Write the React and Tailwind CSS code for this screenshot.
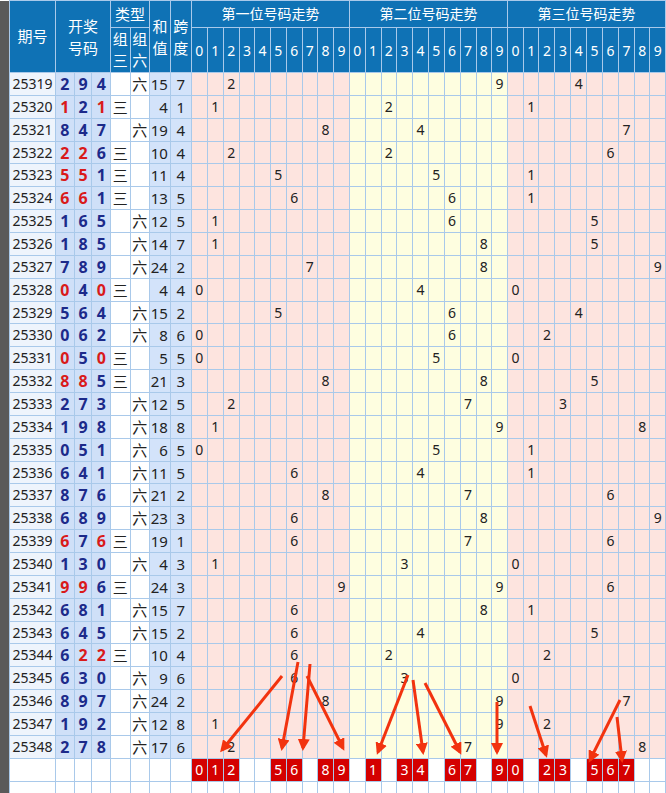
import React from 'react';

const rows = [
  ['25319', '294', '六', 15, 7], ['25320', '121', '三', 4, 1], ['25321', '847', '六', 19, 4],
  ['25322', '226', '三', 10, 4], ['25323', '551', '三', 11, 4], ['25324', '661', '三', 13, 5],
  ['25325', '165', '六', 12, 5], ['25326', '185', '六', 14, 7], ['25327', '789', '六', 24, 2],
  ['25328', '040', '三', 4, 4], ['25329', '564', '六', 15, 2], ['25330', '062', '六', 8, 6],
  ['25331', '050', '三', 5, 5], ['25332', '885', '三', 21, 3], ['25333', '273', '六', 12, 5],
  ['25334', '198', '六', 18, 8], ['25335', '051', '六', 6, 5], ['25336', '641', '六', 11, 5],
  ['25337', '876', '六', 21, 2], ['25338', '689', '六', 23, 3], ['25339', '676', '三', 19, 1],
  ['25340', '130', '六', 4, 3], ['25341', '996', '三', 24, 3], ['25342', '681', '六', 15, 7],
  ['25343', '645', '六', 15, 2], ['25344', '622', '三', 10, 4], ['25345', '630', '六', 9, 6],
  ['25346', '897', '六', 24, 2], ['25347', '192', '六', 12, 8], ['25348', '278', '六', 17, 6],
];

const picks = [
  [0, 1, 2, 5, 6, 8, 9],
  [1, 3, 4, 6, 7, 9],
  [0, 2, 3, 5, 6, 7],
];

const secBg = ['bg-[#fde4df]', 'bg-[#fefee0]', 'bg-[#fde4df]'];
const digits = [0, 1, 2, 3, 4, 5, 6, 7, 8, 9];
const cell = 'border border-[#a9c9ea] p-0 text-center';

const arrows = [
  [282, 676, 222, 750], [298, 662, 282, 748], [310, 664, 303, 748], [307, 676, 343, 748],
  [408, 675, 378, 752], [413, 680, 423, 752], [425, 683, 460, 752], [497, 702, 497, 752],
  [530, 706, 546, 755], [620, 700, 590, 760], [617, 717, 622, 760],
];

export default function App() {
  return (
    <div className="relative w-[666px] h-[793px] overflow-hidden bg-white" style={{ fontFamily: '"Noto Sans", "Noto Sans CJK SC", sans-serif' }}>
      <table className="table-fixed border-collapse text-[15px] text-[#222]">
        <colgroup>
          <col className="w-[10px]" />
          <col className="w-[46px]" />
          <col className="w-[19px]" /><col className="w-[18px]" /><col className="w-[19px]" />
          <col className="w-[19.5px]" /><col className="w-[19.5px]" />
          <col className="w-[21px]" /><col className="w-[21px]" />
          {Array.from({ length: 30 }).map((_, i) => <col key={i} className="w-[15.7px]" />)}
        </colgroup>
        <thead className="bg-[#0f72b5] text-white">
          <tr className="h-[27px]">
            <th rowSpan={2} className="bg-[#5a5a5a] p-0" />
            <th rowSpan={2} className={`${cell} font-normal text-[15px]`}>期号</th>
            <th colSpan={3} rowSpan={2} className={`${cell} font-normal leading-[22px]`}>开奖<br />号码</th>
            <th colSpan={2} className={`${cell} font-normal leading-[20px]`}>类型</th>
            <th rowSpan={2} className={`${cell} font-normal leading-[22px]`}>和<br />值</th>
            <th rowSpan={2} className={`${cell} font-normal leading-[22px]`}>跨<br />度</th>
            {['第一位号码走势', '第二位号码走势', '第三位号码走势'].map(t => (
              <th key={t} colSpan={10} className={`${cell} font-normal text-[14px] leading-[20px]`}>{t}</th>
            ))}
          </tr>
          <tr className="h-[45px]">
            <th className={`${cell} font-normal leading-[21px]`}>组<br />三</th>
            <th className={`${cell} font-normal leading-[21px]`}>组<br />六</th>
            {[0, 1, 2].map(s => digits.map(d => (
              <th key={`${s}-${d}`} className={`${cell} font-normal text-[14px]`}>{d}</th>
            )))}
          </tr>
        </thead>
        <tbody className="leading-[18px]">
          {rows.map(([id, nums, type, sum, span]) => {
            const ds = nums.split('');
            return (
              <tr key={id} className="h-[22.86px]">
                <td className="bg-[#5a5a5a] p-0" />
                <td className={`${cell} bg-[#eef4fc] text-[14px]`}>{id}</td>
                {ds.map((d, i) => {
                  const dup = ds.filter(x => x === d).length > 1;
                  return (
                    <td key={i} className={`${cell} bg-[#cfe0f8] font-bold text-[16px] ${dup ? 'text-[#d91a1a]' : 'text-[#1c2a8a]'}`}>{d}</td>
                  );
                })}
                <td className={`${cell} bg-white`}>{type === '三' ? '三' : ''}</td>
                <td className={`${cell} bg-white`}>{type === '六' ? '六' : ''}</td>
                <td className={`${cell} bg-[#d3e3fa] text-right pr-[2px]`}>{sum}</td>
                <td className={`${cell} bg-[#d3e3fa]`}>{span}</td>
                {ds.map((d, s) => digits.map(n => (
                  <td key={`${s}-${n}`} className={`${cell} ${secBg[s]} text-[14px]`}>{Number(d) === n ? n : ''}</td>
                )))}
              </tr>
            );
          })}
          <tr className="h-[23px]">
            <td className="bg-[#5a5a5a] p-0" />
            {Array.from({ length: 8 }).map((_, i) => <td key={i} className={`${cell} bg-white`} />)}
            {picks.map((p, s) => digits.map(n => (
              <td key={`${s}-${n}`} className={`${cell} bg-white`}>
                {p.includes(n) && (
                  <div className="mx-auto h-[22px] w-[15px] bg-[#d40000] text-white text-[14px] leading-[22px]">{n}</div>
                )}
              </td>
            )))}
          </tr>
          <tr className="h-[23px]">
            <td className="bg-[#5a5a5a] p-0" />
            {Array.from({ length: 38 }).map((_, i) => <td key={i} className={`${cell} bg-white`} />)}
          </tr>
        </tbody>
      </table>
      <svg className="absolute inset-0 pointer-events-none" width="666" height="793">
        <defs>
          <marker id="ah" markerWidth="4" markerHeight="4" refX="3" refY="2" orient="auto">
            <path d="M0,0 L4,2 L0,4 Z" fill="#f2330f" />
          </marker>
        </defs>
        {arrows.map(([x1, y1, x2, y2], i) => (
          <line key={i} x1={x1} y1={y1} x2={x2} y2={y2} stroke="#f2330f" strokeWidth="3" markerEnd="url(#ah)" />
        ))}
      </svg>
    </div>
  );
}
